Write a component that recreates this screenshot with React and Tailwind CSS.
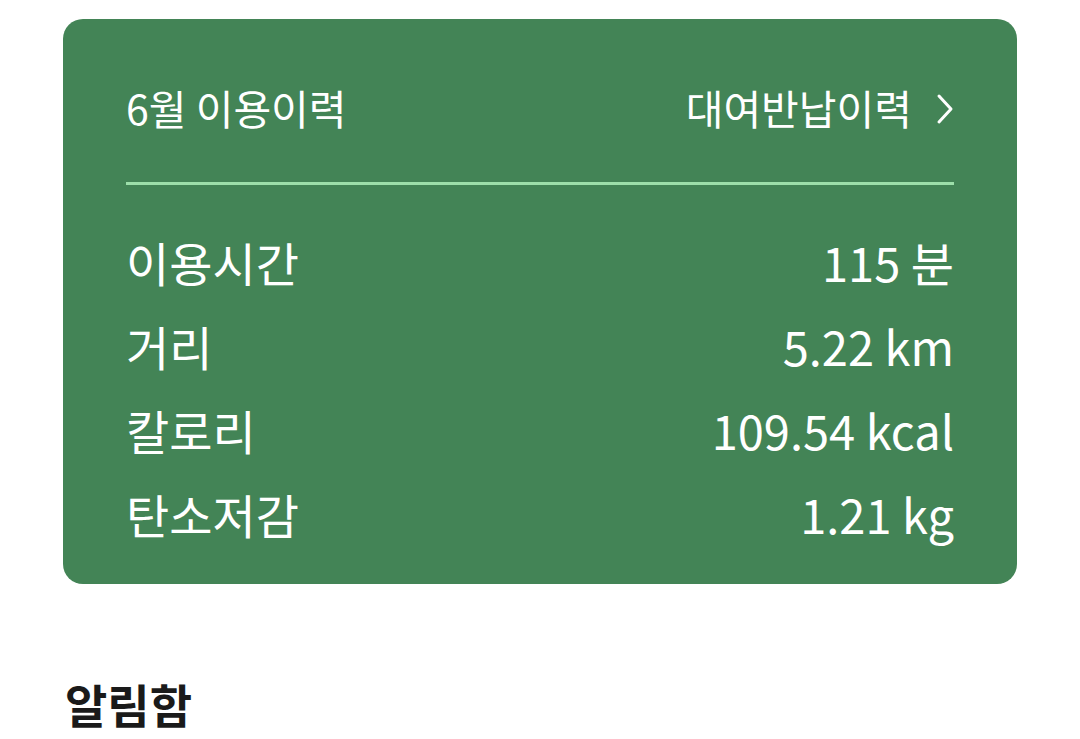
export default function App() {
  const rows = [
    ["이용시간", "115 분"],
    ["거리", "5.22 km"],
    ["칼로리", "109.54 kcal"],
    ["탄소저감", "1.21 kg"],
  ];
  return (
    <div
      className="w-[1080px] h-[739px] bg-white overflow-hidden pt-[19px]"
      style={{ fontFamily: '"Noto Sans CJK KR", "Noto Sans", sans-serif' }}
    >
      <div className="mx-[63px] bg-[#438456] rounded-[20px] px-[63px] pt-[52px] pb-[29px] text-white">
        <div className="h-[72px] flex items-center justify-between">
          <span className="text-[41px] leading-none">6월 이용이력</span>
          <span className="flex items-center gap-[24px] text-[41px] leading-none">
            대여반납이력
            <svg width="18" height="32" viewBox="0 0 18 32" fill="none" className="relative top-[2px]">
              <path d="M3 3 L15 16 L3 29" stroke="white" strokeWidth="3" strokeLinecap="round" strokeLinejoin="round" />
            </svg>
          </span>
        </div>
        <div className="mt-[39px] h-[3px] bg-[#9ddfaa]" />
        <div className="mt-[34px] flex flex-col">
          {rows.map(([k, v]) => (
            <div key={k} className="h-[84px] flex items-center justify-between text-[47px] leading-none">
              <span>{k}</span>
              <span>{v}</span>
            </div>
          ))}
        </div>
      </div>
      <div className="mt-[96px] px-[65px] text-[46px] font-bold leading-none text-[#1a1a1a]">알림함</div>
    </div>
  );
}
